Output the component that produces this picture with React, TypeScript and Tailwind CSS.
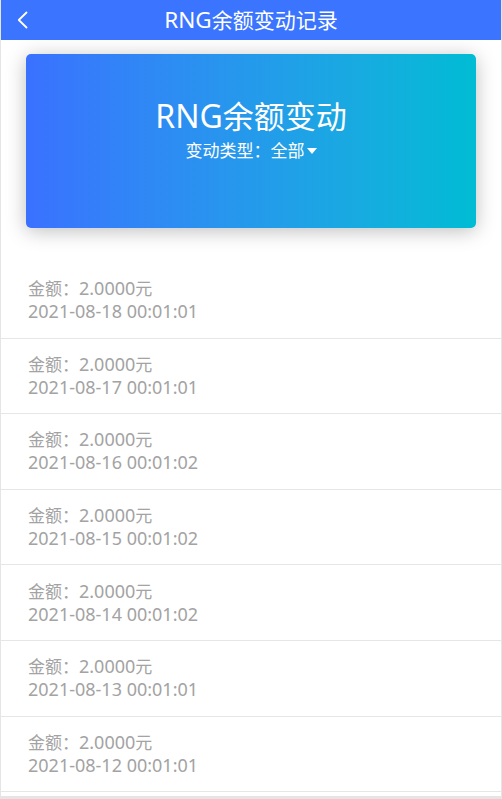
const RECORDS = [
  { amount: "2.0000", time: "2021-08-18 00:01:01" },
  { amount: "2.0000", time: "2021-08-17 00:01:01" },
  { amount: "2.0000", time: "2021-08-16 00:01:02" },
  { amount: "2.0000", time: "2021-08-15 00:01:02" },
  { amount: "2.0000", time: "2021-08-14 00:01:02" },
  { amount: "2.0000", time: "2021-08-13 00:01:01" },
  { amount: "2.0000", time: "2021-08-12 00:01:01" },
];

export default function App() {
  return (
    <div className="min-h-[799px] bg-[#e5e5e5] font-['Noto_Sans','Noto_Sans_CJK_SC',sans-serif]">
      <div className="mx-auto w-[500px] bg-white pb-[4px]">
        <header className="relative flex h-10 items-center justify-center bg-[#3a74ff] text-white">
          {/* back chevron */}
          <button type="button" className="absolute left-0 top-0 h-10 w-10" aria-label="Back">
            <svg width="40" height="40" viewBox="0 0 40 40">
              <polyline
                points="26.5,12.5 18.8,20 26.5,27.5"
                fill="none"
                stroke="white"
                strokeWidth="1.8"
                strokeLinecap="round"
                strokeLinejoin="round"
                transform="translate(-1 0)"
              />
            </svg>
          </button>
          <h1 className="text-[21px] leading-none">
            <span className="text-[22.5px]">RNG</span>余额变动记录
          </h1>
        </header>

        <div className="px-[25px] pt-[14px] pb-[35px]">
          <div className="flex h-[174px] flex-col items-center rounded-[5px] bg-gradient-to-r from-[#3a71ff] to-[#00bcd4] pt-[43px] text-white shadow-[0_3px_20px_rgba(0,0,0,0.26)]">
            <div className="text-[31px] leading-[38px]">
              <span className="text-[32px]">RNG</span>余额变动
            </div>
            <div className="mt-[6px] flex items-center text-[17px] leading-[20px]">
              变动类型：全部
              <svg width="10" height="6" viewBox="0 0 10 6" className="ml-[2px]">
                <path d="M0 0h10L5 6z" fill="white" />
              </svg>
            </div>
          </div>
        </div>

        <ul>
          {RECORDS.map((r) => (
            <li
              key={r.time}
              className="flex h-[75.6px] flex-col justify-center border-b border-[#e6e6e6] pl-[27px] text-[17px] leading-[23px] text-[#a3a3a3]"
            >
              <span>
                金额：<span className="text-[18px]">{r.amount}</span>元
              </span>
              <span className="text-[18px]">{r.time}</span>
            </li>
          ))}
        </ul>
      </div>
    </div>
  );
}
